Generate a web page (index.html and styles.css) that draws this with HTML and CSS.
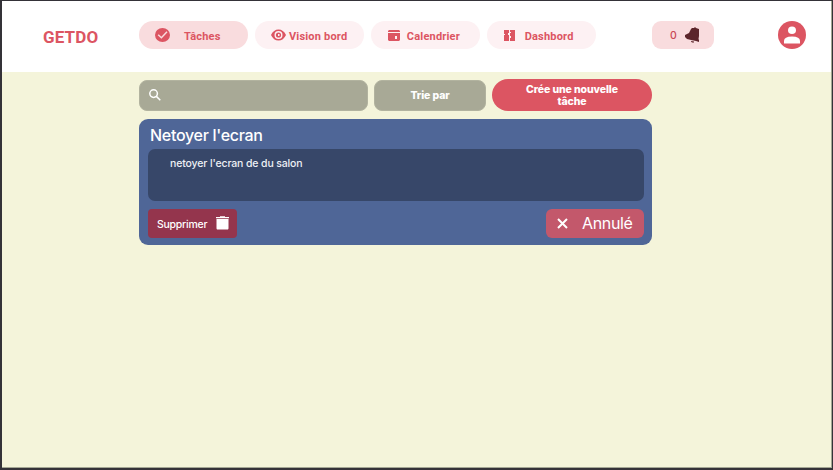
FILE: index.html
```html
<!DOCTYPE html>
<html lang="fr">
<head>
<meta charset="utf-8">
<title>GETDO</title>
<link rel="stylesheet" href="styles.css">
</head>
<body>
<div class="app">
  <header class="header">
    <div class="logo">GETDO</div>
    <nav class="nav">
      <a class="pill active"><svg class="icon-check" viewBox="0 0 15 14"><ellipse cx="7.5" cy="7" rx="7.5" ry="7" fill="#dc5562"/><path d="M3.2 6.7L6.4 9.7L12 3.8" fill="none" stroke="#f9dcde" stroke-width="1.5"/></svg><span>Tâches</span></a>
      <a class="pill"><svg class="icon-eye" viewBox="0 0 15 12"><path fill="#dc5562" fill-rule="evenodd" d="M0 6Q2.6 .5 7.5 .5T15 6Q12.4 11.5 7.5 11.5T0 6ZM7.5 2a4 4 0 1 0 0 8a4 4 0 0 0 0-8Z"/><circle cx="7.5" cy="6" r="2.6" fill="#dc5562"/><path d="M7 5h1.5v2H7z" fill="#fdf1f3"/></svg><span>Vision bord</span></a>
      <a class="pill"><svg class="icon-cal" viewBox="0 0 12 11"><path fill="#dc5562" fill-rule="evenodd" d="M1 0h10l1 1v1H0V1zM0 3h12v7l-1 1H1l-1-1zM7 6v3h2V6z"/></svg><span>Calendrier</span></a>
      <a class="pill"><svg class="icon-dash" viewBox="0 0 11 11"><path fill="#dc5562" d="M0 0h5v3H4v2h1v6H0V5h1V4H0zM6 0h5v11H6V8h1V6H6V3h1V2H6z"/></svg><span>Dashbord</span></a>
    </nav>
    <div class="notice"><span>0</span><svg class="icon-bell" viewBox="0 0 15 16"><path fill="#5c252b" d="M6 2l1-1h2l1-1 1 1 3 1v7l-.5 3 .5 1v2l-3-1-5-1-4-1-2-2V8l2-1 2-1 1-2zM6 14l3 .6v1H7l-1-1z"/></svg></div>
    <svg class="avatar" viewBox="0 0 28 28"><circle cx="14" cy="14" r="14" fill="#dc5562"/><ellipse cx="14" cy="9.3" rx="4" ry="3.8" fill="#fff"/><path d="M6 22.5V20q0-4.5 8-4.5t8 4.5v2.5z" fill="#fff"/></svg>
  </header>
  <main class="main">
    <div class="tools">
      <div class="search"><svg class="icon-search" viewBox="0 0 12 12"><circle cx="4.6" cy="4.6" r="3.8"/><path d="M7.4 7.4L11.3 11.3"/></svg></div>
      <div class="sort"><span>Trie par</span></div>
      <div class="create"><span>Crée une nouvelle<br>tâche</span></div>
    </div>
    <section class="card">
      <h1 class="title"><span>Netoyer l'ecran</span></h1>
      <div class="desc"><span>netoyer l'ecran de du salon</span></div>
      <div class="actions">
        <div class="delete"><span>Supprimer</span><svg class="icon-trash" viewBox="0 0 13 14"><path fill="#fff" d="M0 1h4V.3h5V1h4v1.2H0zM.5 3h12v9.5l-.5 1H1l-.5-1z"/></svg></div>
        <div class="cancel"><svg class="icon-x" viewBox="0 0 11 11"><path d="M1 1L10 10M10 1L1 10"/></svg><span>Annulé</span></div>
      </div>
    </section>
  </main>
</div>
</body>
</html>
```
FILE: styles.css
```css
* { box-sizing: border-box; }
body { margin: 0; font-family: Inter, sans-serif; }
svg { display: block; flex: none; }
span { white-space: nowrap; }
.app { width: 833px; height: 470px; background: #f4f4da; border: solid #343238; border-width: 1px 1px 2px 2px; box-shadow: inset -1px -1px #a4a794; }
.header { height: 71px; margin-right: 1px; padding: 20.4px 25px 0 41px; background: #fff; display: flex; align-items: flex-start; color: #dc5562; }
.logo { width: 96px; height: 32px; line-height: 32px; font-family: Roboto, sans-serif; font-size: 17px; font-weight: 700; letter-spacing: .15px; }
.nav { display: flex; gap: 6.6px; width: 513px; }
.pill { width: 109.3px; height: 27.8px; border-radius: 14px; background: #fdf1f3; display: flex; align-items: center; font-family: Roboto, sans-serif; font-size: 11px; font-weight: 700; line-height: 14px; letter-spacing: .2px; }
.pill span { padding-top: 3px; }
.active { background: #f9dcde; }
.icon-check { width: 15px; height: 14px; margin: 0 14px 0 16px; }
.icon-eye { width: 15px; height: 12px; margin: 0 3px 0 16px; }
.icon-cal { width: 12px; height: 11px; margin: 0 7px 0 17px; }
.icon-dash { width: 11px; height: 11px; margin: 0 10px 0 17px; }
.notice { width: 62px; height: 27.8px; border-radius: 9px; background: #f9dcde; display: flex; align-items: center; padding-left: 18px; font-size: 10.5px; font-weight: 500; color: #c94755; }
.notice span { width: 15px; }
.icon-bell { width: 15px; height: 16px; }
.avatar { width: 28px; height: 28px; margin-left: auto; }
.main { width: 513px; margin-left: 137px; padding-top: 7.2px; }
.tools { display: flex; align-items: flex-start; height: 32.5px; color: #fff; font-weight: 800; font-size: 10.5px; line-height: 12px; letter-spacing: -.1px; text-align: center; }
.search, .sort { height: 30.5px; margin-top: 1px; border-radius: 8px; background: #a8a996; border: 1px solid #b2b39f; display: flex; align-items: center; }
.search { width: 229px; margin-right: 6px; padding-left: 9px; }
.icon-search { width: 12px; height: 12px; fill: none; stroke: #fff; stroke-width: 1.5; }
.sort { width: 112px; margin-right: 6px; justify-content: center; }
.sort span { padding-top: 1px; }
.create { width: 160px; height: 32.3px; border-radius: 16px; background: #dc5562; display: flex; align-items: center; justify-content: center; }
.create span { padding-top: 1px; }
.card { width: 513px; height: 126.4px; margin-top: 7.2px; border-radius: 9px; background: #4f6697; padding: 0 8px 0 9px; color: #fff; }
.title { margin: 0; height: 30.4px; padding: 1px 0 0 2px; line-height: 31px; font-size: 16px; font-weight: 500; letter-spacing: -.3px; }
.desc { height: 52px; border-radius: 7px; background: #374769; padding: 8px 0 0 22px; font-size: 10.5px; font-weight: 500; line-height: 14px; letter-spacing: -.13px; color: #edf0f5; }
.actions { display: flex; justify-content: space-between; padding-top: 7.4px; }
.delete, .cancel { height: 29px; display: flex; align-items: center; }
.delete { width: 89px; border-radius: 4px; background: #94354d; padding-left: 9px; font-size: 10.5px; font-weight: 500; letter-spacing: -.25px; }
.delete span { width: 59px; padding-top: 3px; }
.icon-trash { width: 13px; height: 14px; }
.cancel { width: 98px; border-radius: 6px; background: #c3586b; padding-left: 11px; font-size: 16px; letter-spacing: -.35px; }
.cancel span { margin-left: 14px; }
.icon-x { width: 11px; height: 11px; stroke: #fff; stroke-width: 2; }
```
